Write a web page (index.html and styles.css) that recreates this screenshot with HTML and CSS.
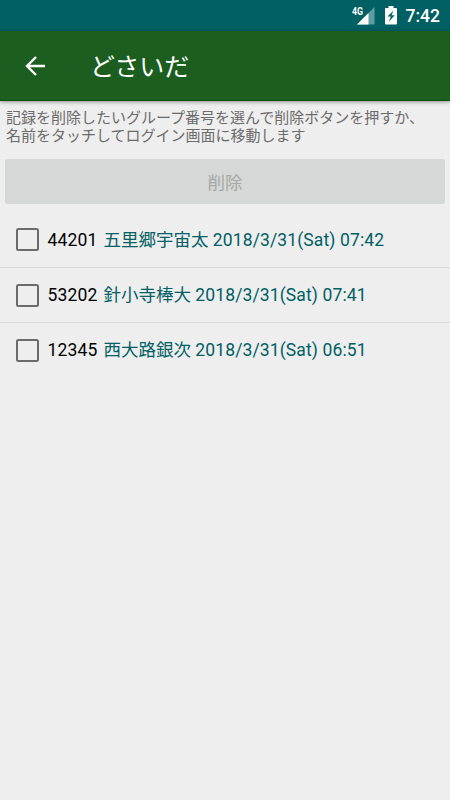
FILE: index.html
```
<!DOCTYPE html>
<html lang="ja">
<head>
  <meta charset="UTF-8">
  <title>どさいだ</title>
  <link rel="stylesheet" href="styles.css">
</head>
<body>
  <div class="statusbar">
    <svg class="signal" width="24" height="20" viewBox="0 0 24 20">
      <path d="M23.500 1V18.500H6Z" fill="#5f9ca0"/>
      <path d="M17.500 7V18.500H6Z" fill="#fff"/>
      <rect width="12.500" height="10.500" fill="#006064"/>
      <text class="network" x="1" y="8.500" textLength="11" lengthAdjust="spacingAndGlyphs">4G</text>
    </svg>
    <svg class="battery" width="12" height="19" viewBox="0 0 12 19">
      <path d="M3.500 0h5v2H11q1 0 1 1v14.500q0 1-1 1H1q-1 0-1-1V3q0-1 1-1h2.500Z" fill="#fff"/>
      <path d="M8.500 4.500L2.500 10.500H5.800L3.800 15.800L9.700 9.300H6.500Z" fill="#006064"/>
    </svg>
    <span class="clock">7:42</span>
  </div>
  <header class="appbar">
    <svg class="back" width="20" height="20" viewBox="0 0 20 20">
      <path d="M20 10H2M11 1L2 10L11 19" fill="none" stroke="#fff" stroke-width="2.400"/>
    </svg>
    <h1>どさいだ</h1>
  </header>
  <main>
    <p class="guide">記録を削除したいグループ番号を選んで削除ボタンを押すか、<br>名前をタッチしてログイン画面に移動します</p>
    <button class="delete" disabled>削除</button>
    <ul class="records">
      <li><span class="check"></span><span class="number">44201</span><span class="name">五里郷宇宙太 <span class="date">2018/3/31(Sat) 07:42</span></span></li>
      <li><span class="check"></span><span class="number">53202</span><span class="name">針小寺棒大 <span class="date">2018/3/31(Sat) 07:41</span></span></li>
      <li><span class="check"></span><span class="number">12345</span><span class="name">西大路銀次 <span class="date">2018/3/31(Sat) 06:51</span></span></li>
    </ul>
  </main>
</body>
</html>
```
FILE: styles.css
```
* {
  box-sizing: border-box;
}
body {
  margin: 0;
  height: 800px;
  overflow: hidden;
  background-color: #eeeeee;
  font-family: Roboto, 'Noto Sans CJK JP', sans-serif;
}
.statusbar {
  display: flex;
  justify-content: flex-end;
  height: 31px;
  padding-right: 10px;
  background-color: #006064;
  color: white;
}
.signal {
  margin-top: 6px;
}
.network {
  fill: white;
  font-size: 10px;
  font-weight: 700;
}
.battery {
  margin: 6px 9px 0 10px;
}
.clock {
  font-size: 17.5px;
  font-weight: 500;
  line-height: 33px;
}
.appbar {
  display: flex;
  align-items: center;
  height: 70px;
  padding-left: 25px;
  background-color: #1b5e20;
  border-bottom: 1px solid #005000;
  box-shadow: 0 1px 4px rgba(0, 0, 0, 0.4);
  color: white;
}
.appbar h1 {
  margin: -2px 0 0 45px;
  font-size: 25px;
  font-weight: 400;
}
.guide {
  margin: 0;
  padding: 9px 6px 0;
  height: 58px;
  color: #6b6b6b;
  font-size: 15px;
  line-height: 17.5px;
  white-space: nowrap;
}
.delete {
  display: block;
  width: 440px;
  height: 45px;
  margin: 0 5px;
  padding: 0;
  border: 0;
  border-radius: 2.5px;
  background-color: #d6d8d7;
  color: #a6a7a6;
  font-family: inherit;
  font-size: 17.5px;
}
.records {
  margin: 8px 0 0;
  padding: 0;
  list-style: none;
}
.records li {
  display: flex;
  align-items: center;
  height: 55.3px;
  padding-left: 16px;
  font-size: 17.5px;
  line-height: 26px;
  white-space: nowrap;
}
.records li:first-child {
  height: 55px;
}
.records li + li {
  border-top: 1px solid #d8d8d8;
}
.check {
  width: 23px;
  height: 23px;
  border: 2.5px solid #6b6b6b;
  border-radius: 2.5px;
}
.number {
  width: 56px;
  margin-left: 8.5px;
  color: black;
  letter-spacing: 0.15px;
}
.name {
  color: #006064;
}
.date {
  letter-spacing: 0.12px;
}
```
